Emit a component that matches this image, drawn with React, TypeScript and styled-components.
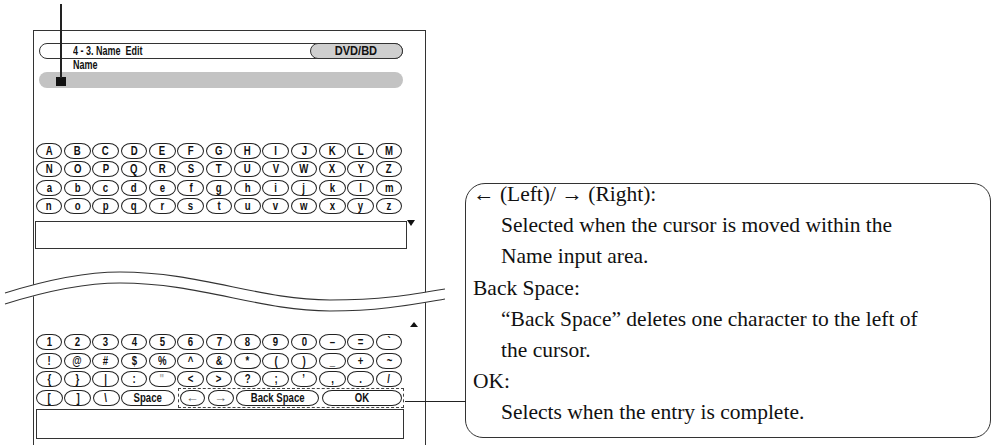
import React from "react";
import styled, { createGlobalStyle } from "styled-components";

const GlobalStyle = createGlobalStyle`
  html, body {
    margin: 0;
    padding: 0;
    background: #fff;
  }
  body {
    width: 995px;
    height: 445px;
    overflow: hidden;
    font-family: "Liberation Sans", Arial, sans-serif;
  }
`;

const upperRows = [
	"ABCDEFGHIJKLM".split(""),
	"NOPQRSTUVWXYZ".split(""),
	"abcdefghijklm".split(""),
	"nopqrstuvwxyz".split(""),
];

const lowerRows = [
	["1", "2", "3", "4", "5", "6", "7", "8", "9", "0", "–", "=", "`"],
	["!", "@", "#", "$", "%", "^", "&", "*", "(", ")", "_", "+", "~"],
	["{", "}", "|", ":", "\"", "<", ">", "?", ";", "’", ",", ".", "/"],
];

function App() {
	return (
		<>
			<GlobalStyle />
			<Page>
				<Diagram>
					<Frame>
						<Header>
							<Narrow $origin="left" $scale={0.75}>
								4 - 3. Name&nbsp; Edit
							</Narrow>
							<DiscTag>
								<Narrow $scale={0.85}>DVD/BD</Narrow>
							</DiscTag>
						</Header>
						<NameLabel>
							<Narrow $origin="left" $scale={0.75}>
								Name
							</Narrow>
						</NameLabel>
						<NameBar>
							<Cursor />
						</NameBar>

						<KeyGrid $top={55}>
							{upperRows.flat().map((k, i) => (
								<Key key={i}>
									<Narrow>{k}</Narrow>
								</Key>
							))}
						</KeyGrid>
						<InputRow $top={6.5}>
							<InputBox $width={372} $height={28} />
							<TriangleDown />
						</InputRow>

						<ScrollUpRow>
							<TriangleUp />
						</ScrollUpRow>
						<KeyGrid $top={7.5}>
							{lowerRows.flat().map((k, i) => (
								<Key key={i} $faded={k === "\""}>
									<Narrow>{k}</Narrow>
								</Key>
							))}
						</KeyGrid>
						<LastRow>
							<Key $width={27}>
								<Narrow>[</Narrow>
							</Key>
							<Key $width={27}>
								<Narrow>]</Narrow>
							</Key>
							<Key $width={27}>
								<Narrow>\</Narrow>
							</Key>
							<Key $width={54}>
								<Narrow>Space</Narrow>
							</Key>
							<DashedGroup>
								<Key $width={25.5} $thin>
									←
								</Key>
								<Key $width={26} $thin>
									→
								</Key>
								<Key $width={83}>
									<Narrow>Back Space</Narrow>
								</Key>
								<Key $width={80.5}>
									<Narrow>OK</Narrow>
								</Key>
							</DashedGroup>
						</LastRow>
						<InputRow $top={3}>
							<InputBox $width={368} $height={30} $left={2} />
						</InputRow>
					</Frame>
				</Diagram>

				<Callout>
					<Lines>
						<Term>← (Left)/ → (Right):</Term>
						<Desc>
							Selected when the cursor is moved within the
							<br />
							Name input area.
						</Desc>
						<Term>Back Space:</Term>
						<Desc>
							“Back Space” deletes one character to the left of
							<br />
							the cursor.
						</Desc>
						<Term>OK:</Term>
						<Desc>Selects when the entry is complete.</Desc>
					</Lines>
				</Callout>

				{/* break mark across the screen drawing */}
				<WaveBreak viewBox="0 0 445 60" width="445" height="60">
					<path
						d="M2,32 C40,20 80,10 120,10 C200,10 260,38 330,38 C380,38 410,33 445,27 L445,37 C410,43 380,49 330,49 C260,49 200,21 120,21 C80,21 40,32 2,43 Z"
						fill="#fff"
					/>
					<path
						d="M5,31 C40,20 80,10 120,10 C200,10 260,38 330,38 C380,38 410,33 445,27"
						fill="none"
						stroke="#333"
						strokeWidth="1.1"
					/>
					<path
						d="M5,42 C40,31 80,21 120,21 C200,21 260,49 330,49 C380,49 410,43 445,37"
						fill="none"
						stroke="#333"
						strokeWidth="1.1"
					/>
				</WaveBreak>

				<PointerLine />
				<LeaderLine />
			</Page>
		</>
	);
}

const Page = styled.div`
	position: relative;
	width: 995px;
	height: 445px;
	display: flex;
	align-items: flex-start;
	overflow: hidden;
`;

const Diagram = styled.div`
	margin: 30px 0 0 33px;
	width: 393px;
	flex: none;
`;

const Frame = styled.div`
	box-sizing: border-box;
	width: 393px;
	height: 415px;
	border: 1.5px solid #333;
	border-bottom: none;
	padding-top: 11.5px;
	display: flex;
	flex-direction: column;
	font-family: "Liberation Sans", Arial, sans-serif;
	font-weight: bold;
	color: #111;
`;

const Narrow = styled.span<{ $origin?: string; $scale?: number }>`
	display: inline-block;
	transform: scaleX(${p => p.$scale ?? 0.8});
	transform-origin: ${p => p.$origin || "center"};
	white-space: nowrap;
`;

const Header = styled.div`
	box-sizing: border-box;
	margin-left: 4.5px;
	width: 364px;
	height: 16px;
	border: 1px solid #333;
	border-radius: 8px;
	display: flex;
	align-items: center;
	padding-left: 33px;
	font-size: 12px;
`;

const DiscTag = styled.div`
	box-sizing: border-box;
	margin: -1px -1px -1px auto;
	width: 93px;
	height: 16px;
	border: 1px solid #333;
	border-radius: 8px;
	background: #cfcfcf;
	display: flex;
	align-items: center;
	justify-content: center;
	font-size: 13px;
`;

const NameLabel = styled.div`
	margin-left: 38.5px;
	height: 13px;
	line-height: 13px;
	font-size: 12px;
`;

const NameBar = styled.div`
	box-sizing: border-box;
	margin-left: 4.5px;
	width: 364px;
	height: 16px;
	border-radius: 8px;
	background: #c3c3c3;
	display: flex;
	align-items: flex-end;
	padding: 0 0 2px 17px;
`;

const Cursor = styled.div`
	width: 10px;
	height: 9px;
	background: #111;
`;

const KeyGrid = styled.div<{ $top: number }>`
	margin: ${p => p.$top}px 0 0 1.5px;
	width: 367px;
	display: grid;
	grid-template-columns: repeat(13, 1fr);
	column-gap: 1.5px;
	row-gap: 2.5px;
`;

const Key = styled.div<{ $width?: number; $faded?: boolean; $thin?: boolean }>`
	box-sizing: border-box;
	${p => (p.$width ? `width: ${p.$width}px; flex: none;` : "")}
	height: 16px;
	border: 1.2px solid #222;
	border-radius: 10px / 8px;
	display: flex;
	align-items: center;
	justify-content: center;
	font-size: ${p => (p.$thin ? "13px" : "12px")};
	font-weight: ${p => (p.$thin ? "normal" : "bold")};
	color: ${p => (p.$faded ? "#aaa" : p.$thin ? "#666" : "#111")};
	line-height: 1;
`;

const LastRow = styled.div`
	margin: 2.5px 0 0 1.5px;
	display: flex;
	gap: 1.5px;
`;

const DashedGroup = styled.div`
	margin-left: 3px;
	display: flex;
	gap: 2.5px;
	outline: 1px dashed #444;
	outline-offset: 1.5px;
`;

const InputRow = styled.div<{ $top: number }>`
	margin-top: ${p => p.$top}px;
	display: flex;
	align-items: flex-start;
`;

const InputBox = styled.div<{ $width: number; $height: number; $left?: number }>`
	box-sizing: border-box;
	margin-left: ${p => p.$left ?? 0.5}px;
	width: ${p => p.$width}px;
	height: ${p => p.$height}px;
	border: 1.2px solid #333;
`;

const TriangleDown = styled.div`
	margin: -1px 0 0 0;
	width: 0;
	height: 0;
	border-left: 4.5px solid transparent;
	border-right: 4.5px solid transparent;
	border-top: 6px solid #111;
`;

const ScrollUpRow = styled.div`
	margin: 73px 0 0 375.5px;
	display: flex;
`;

const TriangleUp = styled.div`
	width: 0;
	height: 0;
	border-left: 4px solid transparent;
	border-right: 4px solid transparent;
	border-bottom: 5px solid #111;
`;

const Callout = styled.div`
	box-sizing: border-box;
	flex: none;
	margin: 183px 0 0 39px;
	width: 526px;
	height: 255px;
	border: 1.5px solid #333;
	border-radius: 20px 18px 18px 18px;
	padding: 0 0 0 7px;
	font-family: "Liberation Serif", "Times New Roman", serif;
	font-size: 21.5px;
	line-height: 31.2px;
	color: #111;
`;

const Lines = styled.div`
	margin-top: -5px;
`;

const Term = styled.div`
	white-space: nowrap;
`;

const Desc = styled.div`
	padding-left: 28px;
	white-space: nowrap;
`;

const WaveBreak = styled.svg`
	position: absolute;
	left: 0;
	top: 262px;
`;

const PointerLine = styled.div`
	position: absolute;
	left: 60px;
	top: 4px;
	width: 1.5px;
	height: 74px;
	background: #222;
`;

const LeaderLine = styled.div`
	position: absolute;
	left: 405px;
	top: 401px;
	width: 61px;
	height: 1.2px;
	background: #222;
`;

export default App;
